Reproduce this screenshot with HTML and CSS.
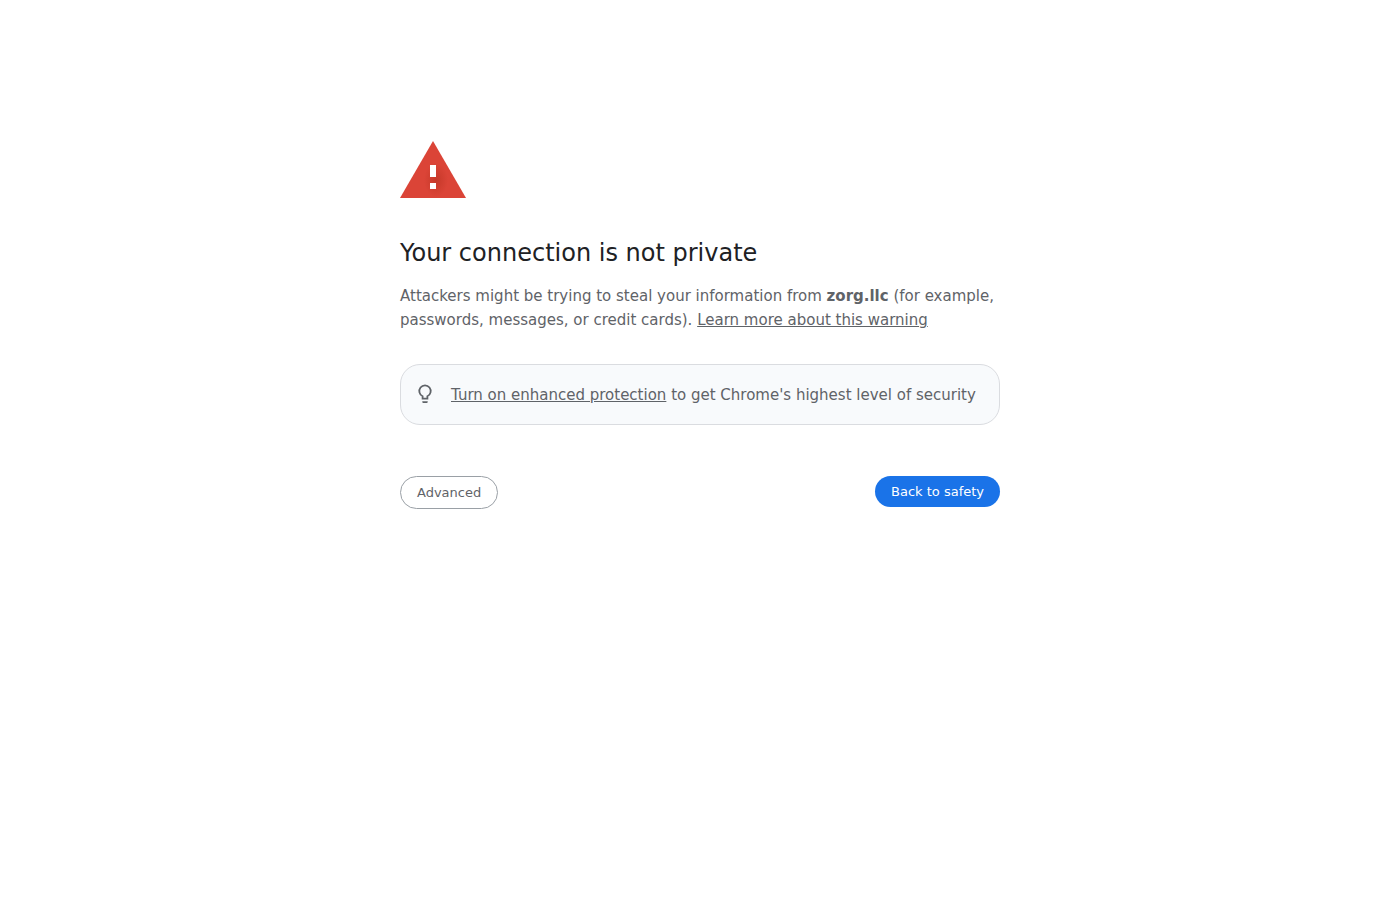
FILE: index.html
```
<!DOCTYPE html>
<html lang="en">
<head>
    <meta charset="UTF-8">
    <meta name="viewport" content="width=device-width, initial-scale=1.0">
    <title>Privacy error</title>
    <link rel="stylesheet" href="styles.css">
</head>
<body>
<main class="interstitial">
    <svg class="warning-icon" viewBox="0 0 72 72" aria-hidden="true">
        <defs>
            <radialGradient id="mark-shadow">
                <stop offset="0" stop-color="#a52714" stop-opacity="0.4"/>
                <stop offset="1" stop-color="#a52714" stop-opacity="0"/>
            </radialGradient>
        </defs>
        <path fill="#db4437" d="M3 72h66L36 15z"/>
        <ellipse fill="url(#mark-shadow)" cx="39" cy="54" rx="12" ry="17"/>
        <path fill="#fff" d="M33 39h6v12h-6zM33 57h6v6h-6z"/>
    </svg>

    <h1>Your connection is not private</h1>
    <p>Attackers might be trying to steal your information from <strong>zorg.llc</strong> (for example, passwords, messages, or credit cards). <a href="#">Learn more about this warning</a></p>

    <!-- Enhanced protection promo -->
    <div class="enhanced-protection">
        <svg class="bulb-icon" viewBox="0 0 20 20" aria-hidden="true">
            <path fill="none" stroke="#5f6368" stroke-width="1.8" d="M7.6 14.6v-2.4a5.7 5.7 0 1 1 4.8 0v2.4z"/>
            <path fill="#5f6368" d="M7.3 17.200h5.400v.8a1 1 0 0 1-1 1H8.300a1 1 0 0 1-1-1z"/>
        </svg>
        <div><a href="#">Turn on enhanced protection</a> to get Chrome's highest level of security</div>
    </div>

    <div class="buttons">
        <button type="button" class="secondary">Advanced</button>
        <button type="button" class="primary">Back to safety</button>
    </div>
</main>
</body>
</html>
```
FILE: styles.css
```
body {
    margin: 0;
    background-color: #fff;
    color: #5f6368;
    font-family: "DejaVu Sans", sans-serif;
    font-size: 15px;
    line-height: 24px;
}

.interstitial {
    box-sizing: border-box;
    max-width: 600px;
    margin: 14vh auto 0;
}

.warning-icon {
    display: block;
    width: 72px;
    height: 72px;
    margin: 0 0 40px -3px;
}

h1 {
    margin: 0 0 16px;
    color: #202124;
    font-size: 24px;
    font-weight: normal;
    line-height: 30px;
}

p {
    margin: 0;
}

a {
    color: inherit;
}

.enhanced-protection {
    display: flex;
    align-items: flex-start;
    gap: 16px;
    margin-top: 32px;
    padding: 18px 14px 17px;
    border: 1px solid #dadce0;
    border-radius: 20px;
    background-color: #f8fafc;
}

.bulb-icon {
    flex: none;
    width: 20px;
    height: 22px;
}

.buttons {
    display: flex;
    justify-content: space-between;
    align-items: flex-start;
    margin-top: 51px;
}

button {
    padding: 8px 16px;
    border: 0;
    border-radius: 20px;
    font-family: inherit;
    font-size: 13px;
    cursor: pointer;
}

.primary {
    background-color: #1a73e8;
    color: #fff;
}

.secondary {
    border: 1px solid #9aa0a6;
    background-color: #fff;
    color: #5f6368;
}
```
